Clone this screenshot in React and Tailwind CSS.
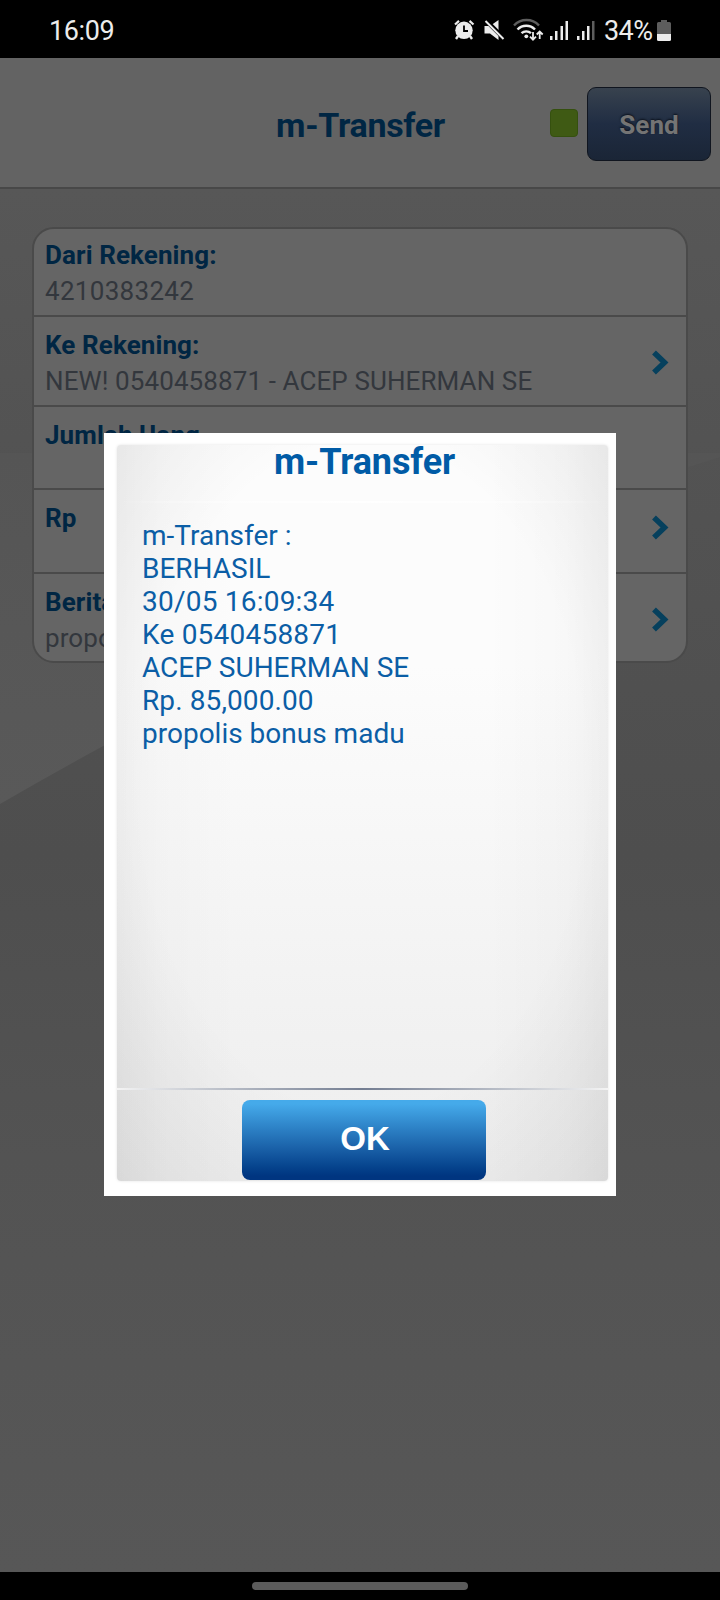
// File: src/App.jsx
import React from 'react';

const ROWS = [
  { label: 'Dari Rekening:', value: '4210383242', box: 'h-[86px] pt-[8px]', spacing: 'tracking-[0.3px]' },
  { label: 'Ke Rekening:', value: 'NEW! 0540458871 - ACEP SUHERMAN SE', box: 'h-[90px] pt-[10px] border-t-2', arrow: 'mt-[23px]' },
  { label: 'Jumlah Uang', value: '', box: 'h-[83px] pt-[10px] border-t-2' },
  { label: 'Rp', value: '', box: 'h-[84px] pt-[10px] border-t-2', arrow: 'mt-[15px]' },
  { label: 'Berita:', value: 'propolis', box: 'h-[89px] pt-[10px] border-t-2', arrow: 'mt-[23px]' },
];

const MESSAGE = [
  { text: 'm-Transfer :' },
  { text: 'BERHASIL' },
  { text: '30/05 16:09:34', spacing: 'tracking-[0.22px]' },
  { text: 'Ke 0540458871', spacing: 'tracking-[0.22px]' },
  { text: 'ACEP SUHERMAN SE' },
  { text: 'Rp. 85,000.00', spacing: 'tracking-[0.1px]' },
  { text: 'propolis bonus madu' },
];

function StatusIcons() {
  return (
    <svg width="155" height="24" viewBox="453 18 155 24" className="mt-0.5 block" fill="#ececec">
      {/* alarm */}
      <path d="M455 24.5l4-3.6M473.500 24.500l-4-3.600" stroke="#ececec" strokeWidth="2.200" fill="none" />
      <circle cx="464" cy="30.300" r="8.700" />
      <path d="M458 36l-2 3M470 36l2 3" stroke="#ececec" strokeWidth="2.400" />
      <path d="M464 25.500v5.500h4" stroke="#000" strokeWidth="1.800" fill="none" />
      {/* muted speaker */}
      <path d="M484.500 26h5.500l8.500-6v20l-8.500-6.500h-5.500z" />
      <path d="M485 19.500l19 19" stroke="#000" strokeWidth="4.500" />
      <path d="M485.500 21l18 18" stroke="#ececec" strokeWidth="2" />
      {/* wifi */}
      <g fill="none" strokeWidth="2.400">
        <path d="M514 25.500a17 17 0 0 1 25 0" stroke="#5d5d5d" />
        <path d="M517.500 29.500a12 12 0 0 1 17.500 0" stroke="#ececec" />
        <path d="M521.500 33.200a7 7 0 0 1 9.500 0" stroke="#ececec" />
      </g>
      <circle cx="526.300" cy="36.300" r="1.900" />
      <path d="M533 32v7.500M530 36.700l3 3 3-3M539.700 39v-7M536.700 34.500l3-3 3 3" stroke="#ececec" strokeWidth="1.800" fill="none" />
      {/* both sim signals */}
      <path d="M550 36h2.500v4H550zM555 31h2.500v9H555zM560.500 26h2.500v14h-2.500zM565.500 21h2.500v19h-2.500z" />
      <path d="M577 36h2.500v4H577zM582 31h2.500v9H582zM587 26h2.500v14H587z" />
      <path d="M592 21h2.500v19H592z" fill="#5d5d5d" />
    </svg>
  );
}

function StatusBar() {
  return (
    <div className="flex h-[58px] items-center bg-black text-[#ececec]">
      <span className="ml-[49px] w-[404px] pt-[3px] text-[27px] leading-8 tracking-[-0.4px]">16:09</span>
      <StatusIcons />
      <span className="-ml-1 w-[53px] pt-[3px] text-[27px] leading-8 tracking-[-0.6px]">34%</span>
      <svg width="14" height="22" viewBox="0 0 14 22" className="mt-[3px] block">
        <path d="M4 0h6v2h2.500Q14 2 14 3.500V14H0V3.500Q0 2 1.500 2H4z" fill="#5d5d5d" />
        <path d="M0 14h14v5.500Q14 21 12.500 21h-11Q0 21 0 19.500z" fill="#ececec" />
      </svg>
    </div>
  );
}

function Header() {
  return (
    <header className="flex h-[131px] items-start border-b-2 border-[#484848] bg-[#636363]">
      <h1 className="ml-[276px] mt-[47px] w-[274px] text-[34px] font-bold leading-10 tracking-[-0.3px] text-[#002643]">m-Transfer</h1>
      <span className="mt-[51px] h-7 w-7 rounded-[4px] border border-[#35500f] bg-[#3f5a14]" />
      <button className="ml-[9px] mt-[29px] h-[74px] w-[124px] rounded-[9px] border border-[#10151f] bg-linear-to-b from-[#38424e] via-[#202d43] to-[#1a2536] pt-0.5 text-[26px] font-bold text-[#747474] [text-shadow:0_-1px_2px_#0b111b]">
        Send
      </button>
    </header>
  );
}

function Chevron({ className }) {
  return (
    <svg width="19" height="26" viewBox="0 0 19 26" className={className}>
      <path d="M3 2.500L13.500 12.500L3 22.500" fill="none" stroke="#06405d" strokeWidth="5.500" />
    </svg>
  );
}

function Wallpaper() {
  return (
    <svg className="absolute inset-0" width="720" height="1383" viewBox="0 189 720 1383">
      <defs>
        <linearGradient id="base" x1="0" y1="0" x2="0" y2="1">
          <stop offset="0" stopColor="#575757" />
          <stop offset="0.180" stopColor="#535353" />
          <stop offset="0.480" stopColor="#4e4e4e" />
          <stop offset="0.700" stopColor="#535353" />
          <stop offset="1" stopColor="#575757" />
        </linearGradient>
        <linearGradient id="band" x1="0" y1="0" x2="0" y2="1">
          <stop offset="0" stopColor="#555555" />
          <stop offset="1" stopColor="#595959" />
        </linearGradient>
      </defs>
      <rect y="189" width="720" height="1383" fill="url(#base)" />
      <path d="M0 453H720V457C480 530 270 635 105 745Q50 775 0 804z" fill="url(#band)" />
    </svg>
  );
}

function TransferForm() {
  return (
    <div className="relative mx-8 mt-[38px] overflow-hidden rounded-[22px] border-2 border-[#4a4a4a] bg-[#656565]">
      {ROWS.map(r => (
        <div key={r.label} className={`flex justify-between border-[#4a4a4a] pl-[11px] pr-[16px] ${r.box}`}>
          <div className="text-[26px] leading-9 tracking-[0.1px]">
            <div className="font-bold text-[#002643]">{r.label}</div>
            <div className={`text-[#33373d] ${r.spacing || ''}`}>{r.value}</div>
          </div>
          {r.arrow && <Chevron className={r.arrow} />}
        </div>
      ))}
    </div>
  );
}

function ResultDialog() {
  return (
    <div className="absolute left-[104px] top-[433px] h-[763px] w-[512px] bg-white pl-[13px] pr-2 pt-[12px]">
      <div className="flex h-[736px] flex-col rounded-[4px] bg-[radial-gradient(ellipse_75%_75%_at_50%_45%,#00000000_60%,#0000000f_100%),linear-gradient(to_right,#0000000a_0%,#00000004_9%,#00000000_25%,#00000000_75%,#00000004_91%,#0000000a_100%),linear-gradient(#fcfcfc_0%,#fcfcfc_30%,#f0f0f0_85%,#efefef_100%)] shadow-[0_0_3px_#e2e2e2]">
        <h2 className="h-[56px] pl-[157px] text-[36px] font-bold leading-[34px] tracking-[-0.1px] text-[#005ba6]">m-Transfer</h2>
        <div className="h-0.5 bg-linear-to-r from-transparent via-white to-transparent" />
        <div className="h-[585px] pl-[25px] pt-[16px] text-[28px] leading-[33px] text-[#0b5ea6]">
          {MESSAGE.map(m => <p key={m.text} className={m.spacing}>{m.text}</p>)}
        </div>
        <div className="h-0.5 bg-linear-to-r from-[#f4f4f4] via-[#737d91] to-[#f4f4f4]" />
        <button className="ml-[125px] mt-[10px] h-[80px] w-[244px] rounded-[8px] bg-linear-to-b from-[#45aaea] from-5% via-[#1c64ab] via-58% to-[#003580] to-95% pb-[3px] pl-[2px] font-['Liberation_Sans',Arial,sans-serif] text-[33px] font-bold text-white">
          OK
        </button>
      </div>
    </div>
  );
}

export default function App() {
  return (
    <div className="relative flex h-[1600px] w-[720px] flex-col overflow-hidden bg-black font-[Roboto,sans-serif]">
      <StatusBar />
      <Header />
      <main className="relative flex-1">
        <Wallpaper />
        <div className="flow-root">
          <TransferForm />
        </div>
      </main>
      <div className="flex h-7 justify-center bg-black pt-[10px]">
        <span className="h-2 w-[216px] rounded-full bg-[#5b5b5b]" />
      </div>
      <ResultDialog />
    </div>
  );
}
